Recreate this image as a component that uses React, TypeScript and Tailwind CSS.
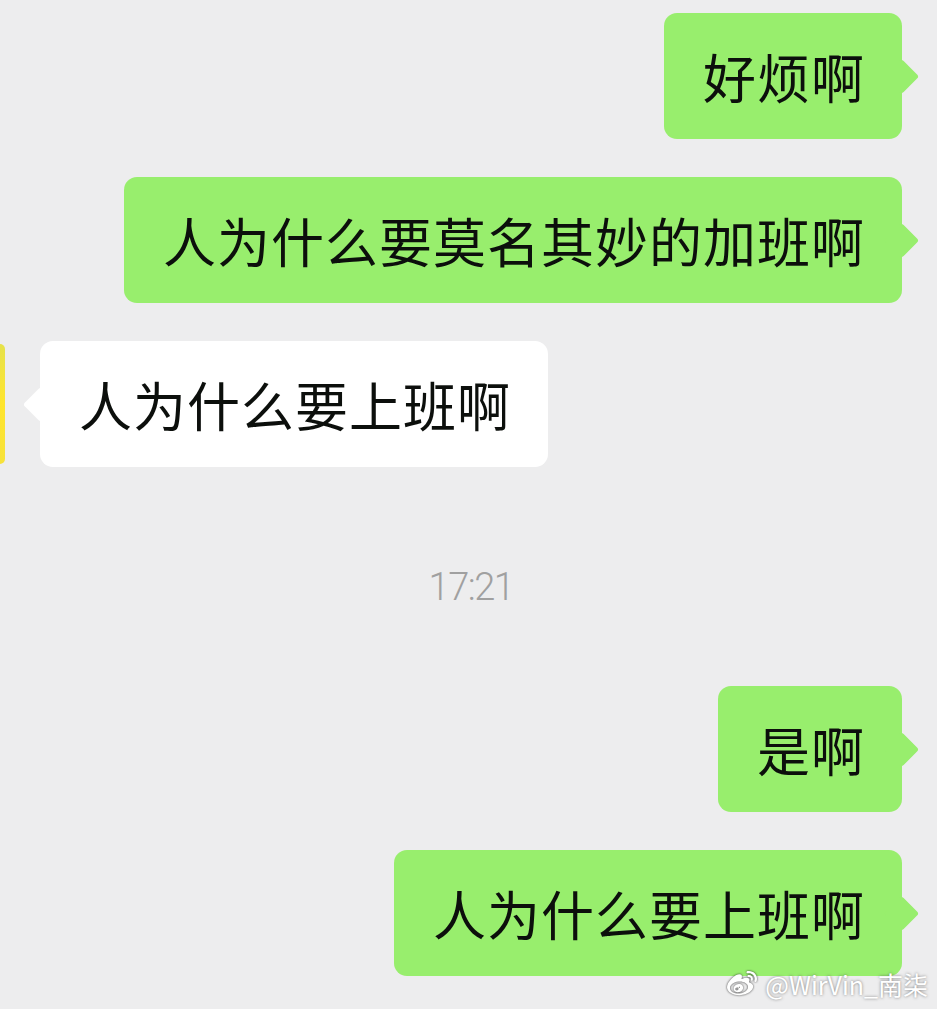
import React from "react";
import { FaWeibo } from "react-icons/fa";

function Bubble({ text, mine = true }: { text: string; mine?: boolean }) {
  return (
    <div
      className={
        "relative rounded-[13px] h-[126px] pl-[39px] pr-[37px] flex items-center text-[53px] tracking-[1px] leading-none text-[#0c0f0c] " +
        (mine ? "bg-[#98ee6d]" : "bg-white")
      }
    >
      {mine ? (
        <span className="absolute top-[51px] right-[-12px] size-[25px] rotate-45 bg-[#98ee6d] rounded-[3px]" />
      ) : (
        <span className="absolute top-[51px] left-[-12px] size-[25px] rotate-45 bg-white rounded-[3px]" />
      )}
      {text}
    </div>
  );
}

export default function App() {
  return (
    <div className="relative w-[937px] h-[1009px] overflow-hidden bg-[#ededee] font-['Noto_Sans_CJK_SC','Noto_Sans',sans-serif]">
      <div className="flex flex-col pt-[13px] pr-[35px] gap-[38px]">
        <div className="flex justify-end">
          <Bubble text="好烦啊" />
        </div>
        <div className="flex justify-end">
          <Bubble text="人为什么要莫名其妙的加班啊" />
        </div>
        <div className="flex items-center">
          <div className="w-[5px] h-[120px] rounded-r-[5px] bg-gradient-to-b from-[#e6e24a] via-[#ffe52c] to-[#f7e23a] mr-[35px]" />
          <Bubble text="人为什么要上班啊" mine={false} />
        </div>
        <div className="h-[143px] pt-[22px] pl-[40px] flex items-center justify-center font-['Roboto',sans-serif] font-light text-[38px] tracking-[-1.5px] text-[#a0a0a0]">
          17:21
        </div>
        <div className="flex justify-end">
          <Bubble text="是啊" />
        </div>
        <div className="flex justify-end">
          <Bubble text="人为什么要上班啊" />
        </div>
      </div>
      <div className="absolute right-[9px] top-[969px] flex items-center gap-[5px] text-[25px] leading-none text-white [text-shadow:0_0_3px_rgba(70,70,70,0.7)]">
        <FaWeibo className="w-[36px] h-[30px] text-white drop-shadow-[0_0_1px_rgba(40,40,40,0.9)]" />
        <span>@WirVin_南柒</span>
      </div>
    </div>
  );
}
